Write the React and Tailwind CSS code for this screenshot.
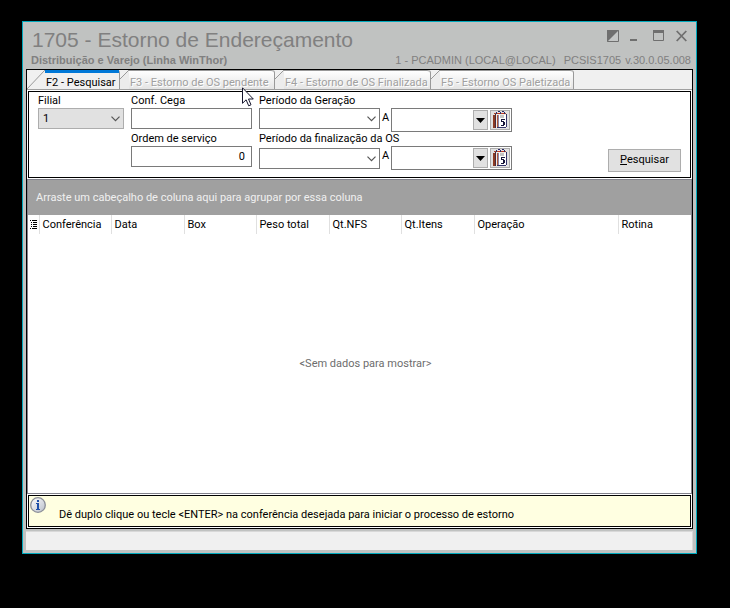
import React from 'react';

const tabs = [
  { id: 'f2', label: 'F2 - Pesquisar', width: 'w-[93px]', active: true },
  { id: 'f3', label: 'F3 - Estorno de OS pendente', width: 'w-[155px]' },
  { id: 'f4', label: 'F4 - Estorno de OS Finalizada', width: 'w-[156px]' },
  { id: 'f5', label: 'F5 - Estorno OS Paletizada', width: 'w-[143px]' },
];

const columns = [
  { label: 'Conferência', width: 'w-[72px]' },
  { label: 'Data', width: 'w-[73px]' },
  { label: 'Box', width: 'w-[72px]' },
  { label: 'Peso total', width: 'w-[73px]' },
  { label: 'Qt.NFS', width: 'w-[72px]' },
  { label: 'Qt.Itens', width: 'w-[73px]' },
  { label: 'Operação', width: 'w-[144px]' },
  { label: 'Rotina', width: '' },
];

const CalendarIcon = () => (
  <svg width="16" height="18" viewBox="0 0 16 18" shapeRendering="crispEdges">
    <path d="M1 4h2v13H1z" fill="#8c3a22" />
    <path d="M3 3h12v14H3z" fill="#efece6" />
    <path d="M2 2h12v1H2z" fill="#a8482a" />
    <path d="M3 3h1v14H3z" fill="#4a2a3c" />
    <path d="M5 4h1v13H5z" fill="#b0563a" />
    <path d="M6 4h1v12H6z" fill="#8a86a8" />
    <path d="M7 4h7v12H7z" fill="#fff" />
    <path d="M14 3h1v13h-1zM5 16h9v1H5z" fill="#34346a" />
    <path d="M4 1h1v2H4zM6 0h2v1H6zM8 1h1v2H8zM10 0h2v1h-2zM12 1h1v2h-1z" fill="#2b2b66" />
    <path d="M6 2h2v1H6zM10 2h2v1h-2z" fill="#c8321e" />
    <path d="M8 4h4v3H8z" fill="#c4c4c4" />
    <path d="M9 8h4v1h-3v1h2v1h1v3h-1v1H9v-1h2v-3H9z" fill="#16163a" />
  </svg>
);

const InfoIcon = () => (
  <svg width="16" height="16" viewBox="0 0 16 16" className="shrink-0">
    <defs>
      <linearGradient id="infoFill" x1="0" y1="0" x2="1" y2="1">
        <stop offset="0" stopColor="#ffffff" />
        <stop offset="1" stopColor="#b9bfca" />
      </linearGradient>
    </defs>
    <circle cx="8" cy="8" r="7.300" fill="url(#infoFill)" stroke="#8b8f98" strokeWidth="1.300" />
    <path d="M7 3h2v2H7zM6 6h3v6h1v1H6v-1h1V7H6z" fill="#1d4fa8" />
  </svg>
);

const Combo = ({ id, className, options = [''] }) => (
  <div className={`relative ${className}`}>
    <select
      id={id}
      className="block h-[21px] w-full appearance-none border border-inherit bg-transparent pl-1 pr-5 text-[11px] leading-[19px] outline-none"
    >
      {options.map((o) => (
        <option key={o}>{o}</option>
      ))}
    </select>
    <svg width="9" height="6" viewBox="0 0 9 6" className="pointer-events-none absolute right-1 top-2">
      <path d="M.5 .7 4.500 4.700 8.500 .7" fill="none" stroke="#555" strokeWidth="1.200" />
    </svg>
  </div>
);

const DateField = ({ label }) => (
  <div className="flex h-6 w-[121px] items-stretch border border-[#7a7a7a] bg-white p-px">
    <input aria-label={label} className="w-0 flex-1 px-1 outline-none" />
    <button type="button" aria-label="Abrir lista" className="flex w-[15px] items-center justify-center border border-[#adadad] bg-[#e1e1e1]">
      <svg width="9" height="5" viewBox="0 0 9 5"><path d="M0 0h9L4.500 5z" /></svg>
    </button>
    <button type="button" aria-label="Calendário" className="ml-0.5 flex w-5 items-center justify-center border border-[#adadad] bg-[#e1e1e1]">
      <CalendarIcon />
    </button>
  </div>
);

const Periodo = ({ id, label, className, lead }) => (
  <div>
    <label htmlFor={id} className={`block ${lead}`}>{label}</label>
    <div className="flex h-6">
      <Combo id={id} className={className} />
      <span className="w-[11px] pl-0.5 leading-5">A</span>
      <DateField label={`${label} até`} />
    </div>
  </div>
);

const TitleBar = () => (
  <header className="font-['Liberation_Sans',sans-serif] text-[#808080]">
    <div className="flex items-start justify-between pl-1.5 pr-1.5">
      <h1 className="pt-1.5 text-[21px] leading-6">1705 - Estorno de Endereçamento</h1>
      <div className="flex items-center pt-2">
        <button type="button" aria-label="Alternar tema" className="mr-2.5">
          <svg width="12" height="12" viewBox="0 0 12 12" className="block">
            <path d="M.5 .5h11v11H.5z" fill="#c4c6c6" stroke="#6f6f6f" />
            <path d="M0 0h12L0 12z" fill="#6f6f6f" />
          </svg>
        </button>
        <button type="button" aria-label="Minimizar" className="mr-3">
          <svg width="12" height="12" viewBox="0 0 12 12" className="block"><path d="M1 9h7v2H1z" fill="#6f6f6f" /></svg>
        </button>
        <button type="button" aria-label="Maximizar" className="mr-3">
          <svg width="11" height="12" viewBox="0 0 11 12" className="block">
            <path d="M.5 1.500h10v9H.5z" fill="none" stroke="#6f6f6f" />
            <path d="M0 0h11v3H0z" fill="#6f6f6f" />
          </svg>
        </button>
        <button type="button" aria-label="Fechar">
          <svg width="11" height="12" viewBox="0 0 11 12" className="block">
            <path d="M.7 1l9.600 10M10.300 1 .7 11" stroke="#6f6f6f" strokeWidth="1.800" />
          </svg>
        </button>
      </div>
    </div>
    <div className="flex h-[17px] items-center pl-[5px] pr-0.5 text-[11px] leading-[17px]">
      <h2 className="flex-1 font-bold">Distribuição e Varejo (Linha WinThor)</h2>
      <span className="mr-2">1 - PCADMIN (LOCAL@LOCAL)</span>
      <span className="mr-1">PCSIS1705</span>
      <span>v.30.0.05.008</span>
    </div>
  </header>
);

const TabStrip = () => (
  <nav role="tablist" className="flex h-5 border-b border-[#a0a0a0] bg-[#f0f0f0]">
    {tabs.map((tab) => (
      <button
        key={tab.id}
        type="button"
        role="tab"
        aria-selected={!!tab.active}
        className={`flex shrink-0 rounded-tr-[3px] border-r border-[#999] ${tab.width} ${tab.active ? 'text-black' : 'bg-[#ececec] text-[#a0a0a0] [text-shadow:1px_1px_#fff]'}`}
      >
        <svg
          viewBox={tab.active ? '0 0 18 19' : '0 0 9 19'}
          className={tab.active ? 'h-[19px] w-[18px] shrink-0' : 'h-[19px] w-[9px] shrink-0'}
        >
          {!tab.active && <path d="M0 0h9L0 9z" fill="#f0f0f0" />}
          <path d={tab.active ? 'M0 19 18 0' : 'M0 9 9 0'} stroke="#999" fill="none" />
        </svg>
        <span
          className={`h-[19px] flex-1 whitespace-nowrap text-left ${
            tab.active
              ? 'border-t-[3px] border-[#0078d7] pl-px leading-[19px]'
              : 'rounded-tr-[3px] border-t border-[#999] bg-linear-to-b from-white to-[#e4e4e4] pl-px pt-px leading-[21px]'
          }`}
        >
          {tab.label}
        </span>
      </button>
    ))}
  </nav>
);

const SearchForm = () => (
  <form className="m-px flex border border-black pb-[7px] pl-[9px] pr-[9px]" onSubmit={(e) => e.preventDefault()}>
    <div className="mr-[7px] w-[86px]">
      <label htmlFor="filial" className="block h-4 leading-[18px]">Filial</label>
      <Combo id="filial" options={['1']} className="border-[#adadad] bg-[#e1e1e1]" />
    </div>
    <div className="mr-[7px] w-[121px]">
      <label htmlFor="conf" className="block h-4 leading-[18px]">Conf. Cega</label>
      <input id="conf" className="mb-px block h-[21px] w-full border border-[#7a7a7a] px-1" />
      <label htmlFor="ordem" className="block h-4 leading-[18px]">Ordem de serviço</label>
      <input id="ordem" defaultValue="0" className="block h-[21px] w-full border border-[#7a7a7a] px-1.5 text-right" />
    </div>
    <div>
      <Periodo id="geracao" label="Período da Geração" lead="h-4 leading-[18px]" className="w-[121px] border-[#7a7a7a]" />
      <Periodo id="finalizacao" label="Período da finalização da OS" lead="h-[14px] leading-[14px]" className="w-[121px] border-[#7a7a7a] pt-0.5 [&>svg]:top-2.5" />
    </div>
    <button type="submit" className="mb-[-2px] ml-auto h-[23px] w-[73px] self-end border border-[#adadad] bg-[#e1e1e1]">
      <u>P</u>esquisar
    </button>
  </form>
);

export default function App() {
  return (
    <div className="flex min-h-screen bg-black pb-[54px] pl-[22px] pr-[33px] pt-[21px] font-['Roboto','DejaVu_Sans',sans-serif] text-[11px] text-black">
      <main className="relative flex flex-1 flex-col border border-[#00a9bd] bg-[#c0c2c1] px-[3px] pb-[3px]">
        <TitleBar />
        <div className="flex flex-1 flex-col border border-black bg-white">
          <TabStrip />
          <SearchForm />
          <section className="flex flex-1 flex-col border border-[#82828c] bg-white">
            <p className="bg-[#a0a0a0] px-2 leading-[35px] text-[#f0f0f0]">
              Arraste um cabeçalho de coluna aqui para agrupar por essa coluna
            </p>
            <table className="w-full table-fixed text-left">
              <thead>
                <tr className="h-[19px]">
                  <th scope="col" aria-label="Seleção" className="w-[11px] p-0">
                    <svg width="8" height="10" viewBox="0 0 8 10" className="ml-0.5" shapeRendering="crispEdges">
                      <path d="M0 0h1v1H0zM2 0h5v1H2zM1 2h1v1H1zM3 2h4v1H3zM1 4h1v1H1zM3 4h4v1H3zM1 6h1v1H1zM3 6h4v1H3zM0 8h1v1H0zM2 8h5v1H2z" />
                    </svg>
                  </th>
                  {columns.map((c) => (
                    <th key={c.label} scope="col" className={`border-l border-[#e0e0e0] py-0 pl-[3px] font-normal leading-[19px] ${c.width}`}>
                      {c.label}
                    </th>
                  ))}
                </tr>
              </thead>
            </table>
            <p className="flex flex-1 items-center justify-center pl-3 pt-0.5 text-[#6d6d6d]">&lt;Sem dados para mostrar&gt;</p>
          </section>
          <aside className="m-px flex h-8 border border-black bg-[#ffffe1] p-px">
            <InfoIcon />
            <p className="self-end pl-[13px] leading-5">
              Dê duplo clique ou tecle &lt;ENTER&gt; na conferência desejada para iniciar o processo de estorno
            </p>
          </aside>
        </div>
        <footer className="mt-0.5 h-[19px] border-r border-t border-[#d8d8d8] bg-[#f0f0f0]" />

        <svg width="12" height="20" viewBox="0 0 12 20" className="pointer-events-none absolute left-[219px] top-[65px]">
          <path d="M.5 .8v15.500l3.600-3.500 2.600 6 2.300-1-2.500-5.800h4.800z" fill="#fff" stroke="#15152c" />
        </svg>
      </main>
    </div>
  );
}
